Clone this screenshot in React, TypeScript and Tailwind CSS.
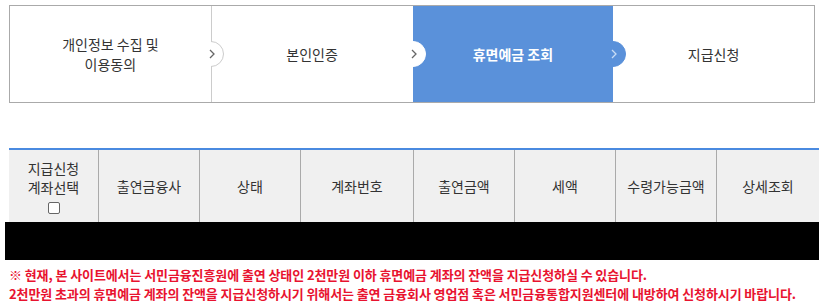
import React from 'react';

const STEPS = [
  { label: ['개인정보 수집 및', '이용동의'], active: false },
  { label: ['본인인증'], active: false },
  { label: ['휴면예금 조회'], active: true },
  { label: ['지급신청'], active: false },
];

const COLS = [
  { w: 'w-[90px]', label: '' },
  { w: 'w-[101px]', label: '출연금융사' },
  { w: 'w-[101px]', label: '상태' },
  { w: 'w-[113px]', label: '계좌번호' },
  { w: 'w-[101px]', label: '출연금액' },
  { w: 'w-[101px]', label: '세액' },
  { w: 'w-[101px]', label: '수령가능금액' },
  { w: 'flex-1', label: '상세조회' },
];

function StepArrow({ fill, stroke, chevron }: { fill: string; stroke: string; chevron: string }) {
  return (
    <svg width="16" height="26" viewBox="0 0 16 26" className="absolute left-[calc(100%-3px)] top-[35px] z-10">
      <path d="M3 0.5 A12.5 12.5 0 0 1 3 25.5 Z" fill={fill} />
      <path d="M3 0.5 A12.5 12.5 0 0 1 3 25.5" fill="none" stroke={stroke} strokeWidth="1" />
      <path d="M2 9 L6 13 L2 17" fill="none" stroke={chevron} strokeWidth="1.3" />
    </svg>
  );
}

export default function App() {
  return (
    <div className="w-[819px] h-[305px] bg-white text-[#333] font-['Noto_Sans_CJK_KR',sans-serif] relative overflow-hidden">
      <div className="pt-[5px] pl-[9px] pr-[4px]">
        <div className="flex h-[98px] border border-[#aaa]">
          {STEPS.map((s, i) => (
            <div
              key={i}
              className={`relative flex-1 flex flex-col items-center justify-center text-[14px] leading-[20px] ${
                s.active ? 'bg-[#5a91da] text-white font-bold' : 'bg-white'
              } ${i === 0 ? 'border-r border-[#ccc]' : ''}`}
            >
              {s.label.map((l) => (
                <span key={l}>{l}</span>
              ))}
              {i === 0 && <StepArrow fill="#fff" stroke="#ccc" chevron="#666" />}
              {i === 1 && <StepArrow fill="#fff" stroke="#fff" chevron="#666" />}
              {i === 2 && <StepArrow fill="#5a91da" stroke="#5a91da" chevron="#c8dcf5" />}
            </div>
          ))}
        </div>
      </div>

      <div className="mt-[45px] ml-[9px] border-t-2 border-[#4a8ae0]">
        <div className="flex h-[72px] bg-[#f0f0f0] text-[14px]">
          {COLS.map((c, i) => (
            <div
              key={i}
              className={`${c.w} shrink-0 flex flex-col items-center justify-center ${i < 7 ? 'border-r border-[#aaa]' : ''}`}
            >
              {i === 0 ? (
                <>
                  <span className="leading-[19px]">지급신청</span>
                  <span className="leading-[19px]">계좌선택</span>
                  <span className="mt-[5px] w-[12px] h-[12px] border border-[#666] rounded-[2px] bg-white" />
                </>
              ) : (
                <span>{c.label}</span>
              )}
            </div>
          ))}
        </div>
      </div>
      <div className="ml-[5px] h-[38px] bg-black" />

      <div className="pl-[9px] pt-[5px] text-[13px] leading-[19px] text-[#e8132f] font-semibold tracking-[-0.1px]">
        <p>※ 현재, 본 사이트에서는 서민금융진흥원에 출연 상태인 2천만원 이하 휴면예금 계좌의 잔액을 지급신청하실 수 있습니다.</p>
        <p>2천만원 초과의 휴면예금 계좌의 잔액을 지급신청하시기 위해서는 출연 금융회사 영업점 혹은 서민금융통합지원센터에 내방하여 신청하시기 바랍니다.</p>
      </div>
    </div>
  );
}
